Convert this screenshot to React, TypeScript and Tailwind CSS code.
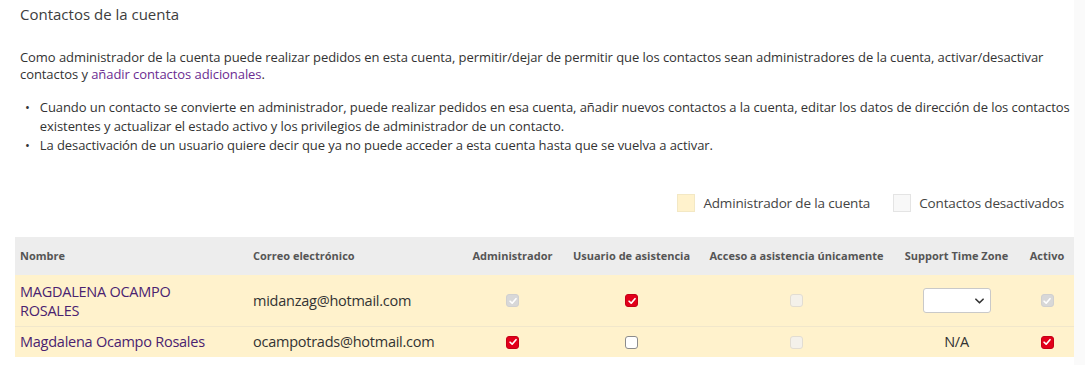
import React from 'react';

type Box = 'on' | 'off' | 'disabledOn' | 'disabledOff';

function CheckBox({ state }: { state: Box }) {
  const styles = {
    on: 'bg-[#e2001a] border-[#c40016]',
    off: 'bg-white border-[#8c8c8c]',
    disabledOn: 'bg-[#d8d8d8] border-[#d0d0d0]',
    disabledOff: 'bg-[#f4f1ea] border-[#e2ddd2]',
  };
  const checked = state === 'on' || state === 'disabledOn';
  return (
    <span className={`inline-flex w-[13px] h-[13px] items-center justify-center rounded-[3px] border ${styles[state]}`}>
      {checked && (
        <svg viewBox="0 0 12 12" className="w-[10px] h-[10px]">
          <path d="M2.5 6.3 L5 8.6 L9.6 3.2" fill="none" stroke="white" strokeWidth="2" strokeLinecap="round" strokeLinejoin="round" />
        </svg>
      )}
    </span>
  );
}

const cols = 'grid grid-cols-[233px_214px_101px_137px_193px_127px_1fr]';

export default function App() {
  return (
    <div className="flex w-[1085px] h-[365px] bg-[#fafafa] text-[#333] font-['Open_Sans',sans-serif]">
      <div className="w-[1074px] bg-white pl-[20px]">
        <h1 className="mt-[4px] text-[15px] leading-[20px] text-[#3d3d3d]">Contactos de la cuenta</h1>

        <p className="mt-[25px] text-[13px] leading-[17px] tracking-[-0.07px] text-[#333] whitespace-nowrap">
          Como administrador de la cuenta puede realizar pedidos en esta cuenta, permitir/dejar de permitir que los contactos sean administradores de la cuenta, activar/desactivar
          <br />
          contactos y <a className="text-[#6b2c91]">añadir contactos adicionales</a>.
        </p>

        <ul className="mt-[15px] text-[13px] leading-[19px] tracking-[-0.08px] text-[#333] whitespace-nowrap">
          <li className="flex gap-[10px] pl-[5px]">
            <span>•</span>
            <span>
              Cuando un contacto se convierte en administrador, puede realizar pedidos en esa cuenta, añadir nuevos contactos a la cuenta, editar los datos de dirección de los contactos
              <br />
              existentes y actualizar el estado activo y los privilegios de administrador de un contacto.
            </span>
          </li>
          <li className="flex gap-[10px] pl-[5px]">
            <span>•</span>
            <span>La desactivación de un usuario quiere decir que ya no puede acceder a esta cuenta hasta que se vuelva a activar.</span>
          </li>
        </ul>

        <div className="mt-[38px] flex items-center justify-end gap-[8px] pr-[10px] text-[13.5px] tracking-[-0.15px] text-[#444]">
          <span className="w-[18px] h-[18px] bg-[#fff2cc] border border-[#f3e8c4]" />
          <span>Administrador de la cuenta</span>
          <span className="ml-[15px] w-[18px] h-[18px] bg-[#f8f8f8] border border-[#e4e4e4]" />
          <span>Contactos desactivados</span>
        </div>

        <div className="mt-[24px] -ml-[5px]">
          <div className={`${cols} h-[38px] items-center bg-[#ededed] text-[11px] font-bold text-[#555]`}>
            <div className="pl-[5px]">Nombre</div>
            <div className="pl-[5px]">Correo electrónico</div>
            <div className="text-center">Administrador</div>
            <div className="text-center">Usuario de asistencia</div>
            <div className="text-center">Acceso a asistencia únicamente</div>
            <div className="text-center">Support Time Zone</div>
            <div className="text-center">Activo</div>
          </div>

          <div className={`${cols} h-[52px] items-center bg-[#fff2cc] border-b border-[#f1e7cb] text-[14.5px] tracking-[-0.25px]`}>
            <div className="pl-[5px] leading-[19px] font-medium text-[#4a2270]">MAGDALENA OCAMPO<br />ROSALES</div>
            <div className="pl-[5px] text-[#333]">midanzag@hotmail.com</div>
            <div className="flex justify-center"><CheckBox state="disabledOn" /></div>
            <div className="flex justify-center"><CheckBox state="on" /></div>
            <div className="flex justify-center"><CheckBox state="disabledOff" /></div>
            <div className="flex justify-center">
              <div className="w-[68px] h-[25px] bg-white border border-[#c9c9c9] rounded-[3px] flex items-center justify-end pr-[6px]">
                <svg viewBox="0 0 10 6" className="w-[9px] h-[6px]">
                  <path d="M1 1 L5 5 L9 1" fill="none" stroke="#333" strokeWidth="1.8" strokeLinecap="round" strokeLinejoin="round" />
                </svg>
              </div>
            </div>
            <div className="flex justify-center"><CheckBox state="disabledOn" /></div>
          </div>

          <div className={`${cols} h-[30px] items-center bg-[#fff2cc] text-[14.5px] tracking-[-0.25px]`}>
            <div className="pl-[5px] font-medium text-[#4a2270]">Magdalena Ocampo Rosales</div>
            <div className="pl-[5px] text-[#333]">ocampotrads@hotmail.com</div>
            <div className="flex justify-center"><CheckBox state="on" /></div>
            <div className="flex justify-center"><CheckBox state="off" /></div>
            <div className="flex justify-center"><CheckBox state="disabledOff" /></div>
            <div className="text-center text-[#333]">N/A</div>
            <div className="flex justify-center"><CheckBox state="on" /></div>
          </div>
        </div>
      </div>
    </div>
  );
}
